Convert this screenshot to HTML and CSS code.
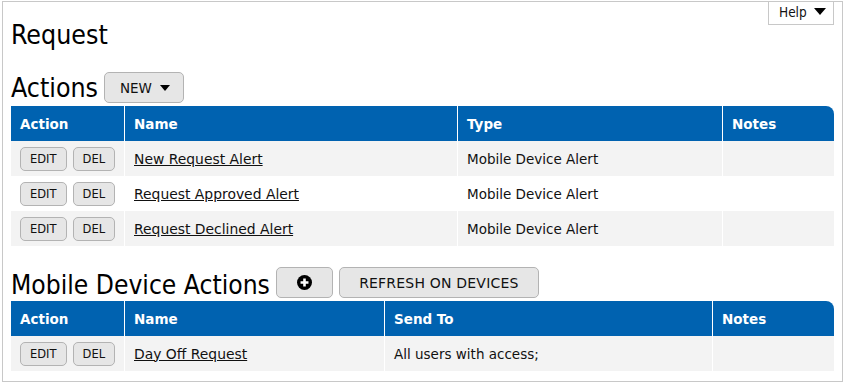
FILE: index.html
```html
<!DOCTYPE html>
<html lang="en">
<head>
    <meta charset="UTF-8">
    <meta name="viewport" content="width=device-width, initial-scale=1.0">
    <title>Request</title>
    <link rel="stylesheet" href="styles.css">
</head>
<body>
    <div class="page">
        <a href="#" class="help">Help <span class="caret"></span></a>

        <h1>Request</h1>

        <div class="section-head">
            <h2>Actions</h2>
            <button class="btn btn-new">NEW <span class="caret"></span></button>
        </div>
        <table class="grid">
            <colgroup>
                <col style="width:113px">
                <col style="width:333px">
                <col style="width:265px">
                <col>
            </colgroup>
            <thead>
                <tr><th>Action</th><th>Name</th><th>Type</th><th>Notes</th></tr>
            </thead>
            <tbody>
                <tr class="alt">
                    <td><button class="btn btn-sm">EDIT</button><button class="btn btn-sm">DEL</button></td>
                    <td><a href="#">New Request Alert</a></td>
                    <td>Mobile Device Alert</td>
                    <td></td>
                </tr>
                <tr>
                    <td><button class="btn btn-sm">EDIT</button><button class="btn btn-sm">DEL</button></td>
                    <td><a href="#">Request Approved Alert</a></td>
                    <td>Mobile Device Alert</td>
                    <td></td>
                </tr>
                <tr class="alt">
                    <td><button class="btn btn-sm">EDIT</button><button class="btn btn-sm">DEL</button></td>
                    <td><a href="#">Request Declined Alert</a></td>
                    <td>Mobile Device Alert</td>
                    <td></td>
                </tr>
            </tbody>
        </table>

        <div class="section-head section-mobile">
            <h2>Mobile Device Actions</h2>
            <button class="btn btn-add" title="Add">
                <svg width="15" height="15" viewBox="0 0 14 14"><circle cx="7" cy="7" r="7" fill="#000"/><path d="M7 3.3v7.4M3.3 7h7.4" stroke="#fff" stroke-width="2.4"/></svg>
            </button>
            <button class="btn btn-refresh">REFRESH ON DEVICES</button>
        </div>
        <table class="grid">
            <colgroup>
                <col style="width:113px">
                <col style="width:260px">
                <col style="width:328px">
                <col>
            </colgroup>
            <thead>
                <tr><th>Action</th><th>Name</th><th>Send To</th><th>Notes</th></tr>
            </thead>
            <tbody>
                <tr class="alt">
                    <td><button class="btn btn-sm">EDIT</button><button class="btn btn-sm">DEL</button></td>
                    <td><a href="#">Day Off Request</a></td>
                    <td>All users with access;</td>
                    <td></td>
                </tr>
            </tbody>
        </table>
    </div>
</body>
</html>
```

FILE: styles.css
```css
body { margin: 1px 2px 0 2px; font-family: "DejaVu Sans", Verdana, sans-serif; font-size: 13.5px; color: #111; background: #fff; }
.page { position: relative; border: 1px solid #c8c8c8; padding: 19px 8px 10px 8px; }
.help { position: absolute; top: -1px; right: 8px; box-sizing: border-box; width: 66px; height: 24px; border: 1px solid #c8c8c8; background: #fff; color: #111; text-decoration: none; font-family: "DejaVu Sans Condensed", "DejaVu Sans", sans-serif; font-stretch: condensed; font-size: 13.5px; line-height: 21px; padding-left: 10px; }
.help .caret { border-left: 6px solid transparent; border-right: 6px solid transparent; border-top: 7px solid #000; margin-left: 3px; vertical-align: 2px; }
.caret { display: inline-block; width: 0; height: 0; border-left: 5px solid transparent; border-right: 5px solid transparent; border-top: 6px solid #000; margin-left: 4px; vertical-align: 2px; }
h1, h2 { font-family: "DejaVu Sans Condensed", "DejaVu Sans", sans-serif; font-stretch: condensed; font-weight: normal; font-size: 26.5px; line-height: 28px; margin: 0; color: #000; }
.section-head { display: flex; align-items: center; gap: 6px; height: 31px; margin-top: 23px; margin-bottom: 3px; }
.section-mobile { margin-top: 21px; }
.section-mobile h2 { margin-top: 4px; font-size: 26.2px; }
.btn { box-sizing: border-box; background: #e6e6e6; border: 1px solid #b3b3b3; border-radius: 5px; color: #111; font-family: "DejaVu Sans", Verdana, sans-serif; cursor: pointer; padding: 0; }
.btn:hover { background: #dcdcdc; }
.btn-new { width: 80px; height: 31px; font-size: 13.5px; padding-left: 2px; }
.btn-add { width: 57px; height: 31px; display: flex; align-items: center; justify-content: center; }
.btn-refresh { width: 200px; height: 31px; font-size: 14px; letter-spacing: 0.2px; }
.btn-sm { height: 24px; font-size: 11.5px; padding: 0 9px; margin-right: 6px; vertical-align: middle; }
.grid { width: 100%; table-layout: fixed; border-collapse: separate; border-spacing: 0; }
.grid th, .grid td { height: 35px; padding: 0 9px; text-align: left; vertical-align: middle; box-sizing: border-box; white-space: nowrap; overflow: hidden; }
.grid th + th, .grid td + td { border-left: 1px solid #fff; }
.grid th { background: #0062b0; color: #fff; font-weight: bold; font-size: 13.5px; }
.grid th:last-child { border-top-right-radius: 8px; }
.grid tr.alt td { background: #f3f3f3; }
.grid a { color: #111; text-decoration: underline; font-size: 13.9px; }
```
